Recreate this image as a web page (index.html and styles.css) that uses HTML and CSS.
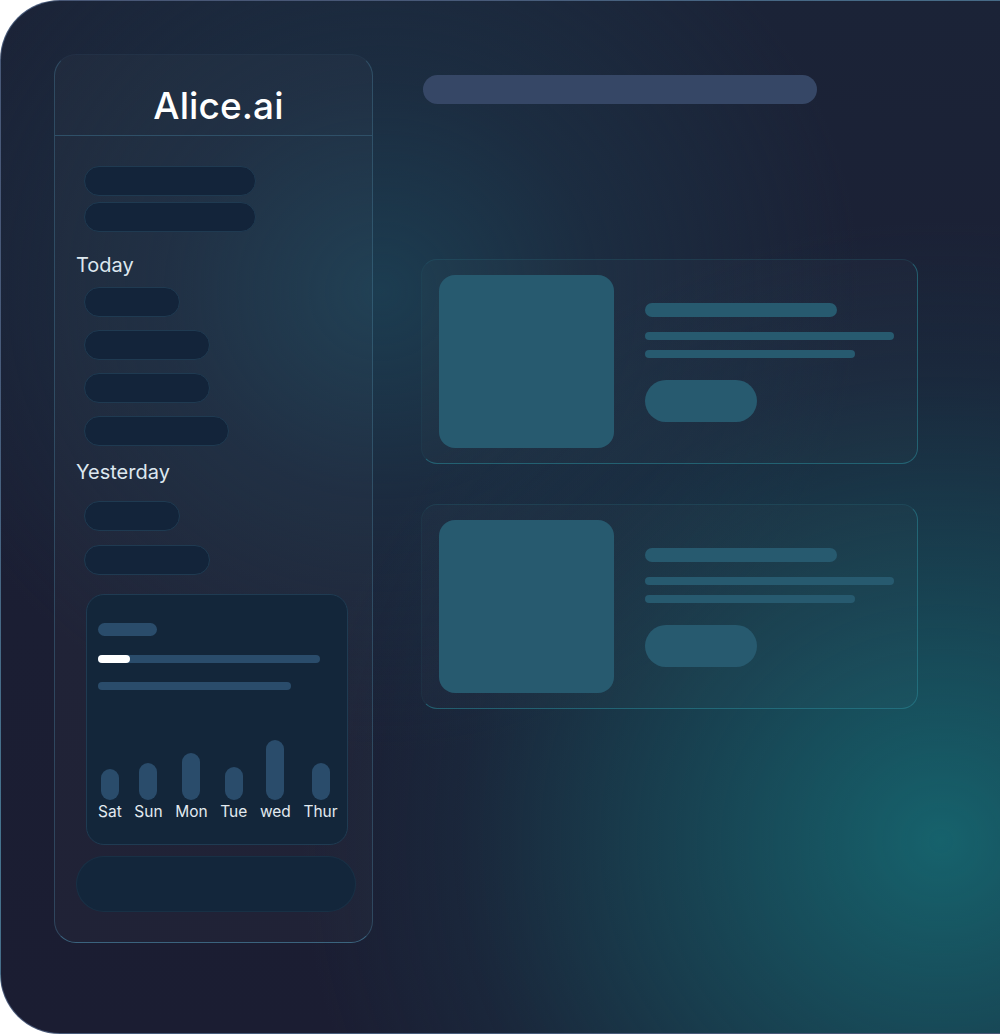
FILE: index.html
```html
<!DOCTYPE html>
<html lang="en">
<head>
<meta charset="utf-8">
<title>Alice.ai</title>
<link rel="stylesheet" href="styles.css">
</head>
<body>
<div class="frame">
  <aside class="sidebar">
    <header class="sb-head"><h1 class="logo">Alice.ai</h1></header>
    <div class="sb-body">
      <div class="pill-group top">
        <div class="pill w172"></div>
        <div class="pill w172"></div>
      </div>
      <div class="group-label">Today</div>
      <div class="pill-group">
        <div class="pill w96"></div>
        <div class="pill w126"></div>
        <div class="pill w126"></div>
        <div class="pill w145"></div>
      </div>
      <div class="group-label yest">Yesterday</div>
      <div class="pill-group y">
        <div class="pill w96"></div>
        <div class="pill w126"></div>
      </div>
      <section class="stats">
        <div class="s-title"></div>
        <div class="s-progress"><div class="s-fill"></div></div>
        <div class="s-line"></div>
        <div class="chart">
          <div class="col"><div class="bar" style="height:31px"></div><span>Sat</span></div>
          <div class="col"><div class="bar" style="height:37px"></div><span>Sun</span></div>
          <div class="col"><div class="bar" style="height:47px"></div><span>Mon</span></div>
          <div class="col"><div class="bar" style="height:33px"></div><span>Tue</span></div>
          <div class="col"><div class="bar" style="height:60px"></div><span>wed</span></div>
          <div class="col"><div class="bar" style="height:37px"></div><span>Thur</span></div>
        </div>
      </section>
      <div class="input-pill"></div>
    </div>
  </aside>
  <main class="main">
    <div class="search"></div>
    <div class="cards">
      <article class="card">
        <div class="thumb"></div>
        <div class="card-text">
          <div class="t-title"></div>
          <div class="t-line l1"></div>
          <div class="t-line l2"></div>
          <div class="t-btn"></div>
        </div>
      </article>
      <article class="card">
        <div class="thumb"></div>
        <div class="card-text">
          <div class="t-title"></div>
          <div class="t-line l1"></div>
          <div class="t-line l2"></div>
          <div class="t-btn"></div>
        </div>
      </article>
    </div>
  </main>
</div>
</body>
</html>
```
FILE: styles.css
```css
* { box-sizing: border-box; margin: 0; padding: 0; }
html, body { background: #ffffff; }
body {
  margin: 0;
  width: 1000px;
  height: 1034px;
  overflow: hidden;
  font-family: Inter, "Noto Sans", sans-serif;
}
.frame {
  width: 1000px;
  height: 1034px;
  border-radius: 60px 0 0 60px;
  border: 1px solid rgba(110, 135, 175, 0.55);
  border-right: none;
  background:
    radial-gradient(ellipse 640px 620px at 940px 840px, rgba(22, 98, 108, 1) 0%, rgba(22, 88, 100, 0.65) 38%, rgba(22, 75, 92, 0.2) 75%, rgba(22, 70, 90, 0) 100%),
    radial-gradient(ellipse 480px 460px at 380px 290px, rgba(28, 62, 82, 0.95) 0%, rgba(28, 55, 75, 0.5) 45%, rgba(28, 50, 70, 0) 100%),
    linear-gradient(180deg, #1b2337 0%, #1b1e33 60%, #1b1d32 100%);
  display: flex;
  padding: 53px 0 0 53px;
}
.sidebar {
  width: 319px;
  height: 889px;
  border-radius: 22px;
  background: rgba(255, 255, 255, 0.022);
  border: 1px solid rgba(75, 130, 160, 0.38);
  border-top-color: rgba(75, 130, 160, 0.08);
  border-bottom-color: rgba(75, 135, 165, 0.65);
  display: flex;
  flex-direction: column;
}
.sb-head {
  padding: 28px 0 7px 10px;
  border-bottom: 1px solid #2f5068;
  text-align: center;
}
.logo {
  font-size: 37px;
  line-height: 45px;
  font-weight: 500;
  color: #ffffff;
  letter-spacing: 0.1px;
}
.sb-body {
  display: flex;
  flex-direction: column;
  padding: 30px 0 0 21px;
}
.pill-group {
  display: flex;
  flex-direction: column;
  gap: 13px;
  padding-left: 8px;
  margin-top: 10px;
}
.pill-group.top { gap: 6px; margin-top: 0; }
.pill-group.y { margin-top: 17px; gap: 14px; }
.pill {
  height: 30px;
  border-radius: 15px;
  background: #13243a;
  border: 1px solid #1f3a51;
}
.w172 { width: 172px; }
.w96 { width: 96px; }
.w126 { width: 126px; }
.w145 { width: 145px; }
.group-label {
  margin-top: 21px;
  font-size: 20px;
  line-height: 24px;
  color: #dde7ef;
  font-weight: 400;
}
.group-label.yest { margin-top: 14px; }
.stats {
  margin: 19px 0 0 10px;
  width: 262px;
  height: 251px;
  border-radius: 18px;
  background: #13263a;
  border: 1px solid #1f3b52;
  padding: 28px 0 23px 11px;
  display: flex;
  flex-direction: column;
}
.s-title {
  width: 59px;
  height: 13px;
  border-radius: 7px;
  background: #2a4c6b;
}
.s-progress {
  margin-top: 19px;
  width: 222px;
  height: 8px;
  border-radius: 4px;
  background: #2a4c6b;
}
.s-fill {
  width: 32px;
  height: 8px;
  border-radius: 4px;
  background: #ffffff;
}
.s-line {
  margin-top: 19px;
  width: 193px;
  height: 8px;
  border-radius: 4px;
  background: #2a4c6b;
}
.chart {
  margin-top: auto;
  display: flex;
  align-items: flex-end;
  gap: 12.6px;
}
.col {
  display: flex;
  flex-direction: column;
  align-items: center;
}
.bar {
  width: 18px;
  border-radius: 9px;
  background: #2a4c6b;
  margin-bottom: 3px;
}
.col span {
  font-size: 15.5px;
  line-height: 18px;
  color: #e2eaf0;
}
.input-pill {
  margin: 11px 0 0 0;
  width: 280px;
  height: 56px;
  border-radius: 28px;
  background: #13263b;
  border: 1px solid rgba(30, 58, 80, 0.5);
}
.main {
  margin-left: 48px;
  padding-top: 21px;
  display: flex;
  flex-direction: column;
}
.search {
  margin-left: 2px;
  width: 394px;
  height: 29px;
  border-radius: 15px;
  background: #364766;
}
.cards {
  margin-top: 155px;
  display: flex;
  flex-direction: column;
  gap: 40px;
}
.card {
  width: 497px;
  height: 205px;
  border-radius: 16px;
  background: rgba(255, 255, 255, 0.015);
  border: 1px solid rgba(40, 130, 145, 0.6);
  border-top-color: rgba(40, 120, 135, 0.22);
  border-left-color: rgba(40, 120, 135, 0.1);
  display: flex;
  padding: 15px 0 0 17px;
}
.thumb {
  width: 175px;
  height: 173px;
  border-radius: 16px;
  background: #275a6f;
}
.card-text {
  margin-left: 31px;
  padding-top: 28px;
  display: flex;
  flex-direction: column;
}
.t-title {
  width: 192px;
  height: 14px;
  border-radius: 7px;
  background: #275a6f;
}
.t-line {
  height: 8px;
  border-radius: 4px;
  background: #275a6f;
}
.t-line.l1 { width: 249px; margin-top: 15px; }
.t-line.l2 { width: 210px; margin-top: 10px; }
.t-btn {
  margin-top: 22px;
  width: 112px;
  height: 42px;
  border-radius: 21px;
  background: #275a6f;
}
```
